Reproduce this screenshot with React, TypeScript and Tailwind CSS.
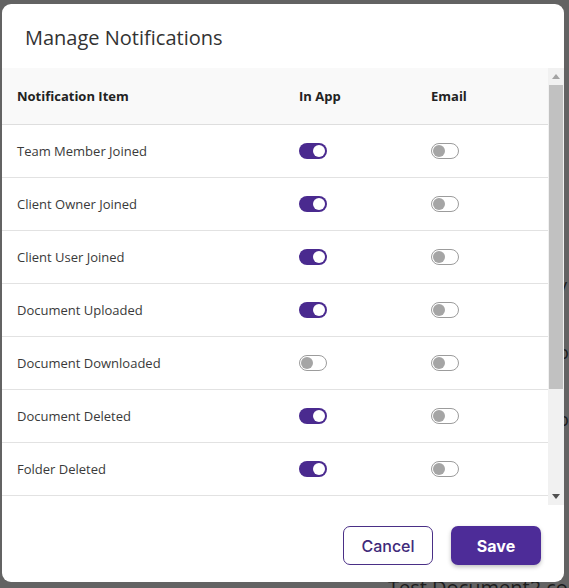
import { useState } from 'react'

type Row = { label: string; inApp: boolean; email: boolean }

const initialRows: Row[] = [
  { label: 'Team Member Joined', inApp: true, email: false },
  { label: 'Client Owner Joined', inApp: true, email: false },
  { label: 'Client User Joined', inApp: true, email: false },
  { label: 'Document Uploaded', inApp: true, email: false },
  { label: 'Document Downloaded', inApp: false, email: false },
  { label: 'Document Deleted', inApp: true, email: false },
  { label: 'Folder Deleted', inApp: true, email: false },
]

function Toggle({ on, onClick }: { on: boolean; onClick: () => void }) {
  return (
    <button
      onClick={onClick}
      className={`relative w-[28px] h-[16px] rounded-full ${
        on ? 'bg-[#4a2a8f]' : 'bg-white border border-[#9c9c9c]'
      }`}
    >
      <span
        className={`absolute top-1/2 -translate-y-1/2 w-[12px] h-[12px] rounded-full ${
          on ? 'right-[2px] bg-white' : 'left-[1px] bg-[#a5a5a5]'
        }`}
      />
    </button>
  )
}

export default function App() {
  const [rows, setRows] = useState(initialRows)

  const flip = (i: number, key: 'inApp' | 'email') =>
    setRows(rs => rs.map((r, j) => (j === i ? { ...r, [key]: !r[key] } : r)))

  return (
    <div
      className="relative w-[569px] h-[588px] overflow-hidden bg-[#636363] pt-[4px] pl-[2px]"
      style={{ fontFamily: '"Open Sans", "Noto Sans", sans-serif' }}
    >
      {/* page behind the overlay */}
      <span className="absolute left-[558px] top-[272px] text-[18px] text-[#1c1c1c]">y</span>
      <span className="absolute left-[558px] top-[339px] text-[18px] text-[#1c1c1c]">o</span>
      <span className="absolute left-[558px] top-[406px] text-[18px] text-[#1c1c1c]">o</span>
      <span className="absolute left-[388px] top-[576px] text-[20px] leading-[24px] text-[#1c1c1c] whitespace-nowrap">
        Test Document2 copy
      </span>

      {/* Modal */}
      <div className="relative w-[562px] h-[578px] bg-white rounded-[9px] flex flex-col overflow-hidden">
        <div className="h-[64px] flex items-center pl-[23px] pt-[3px]">
          <h1 className="text-[20px] font-medium text-[#333]">Manage Notifications</h1>
        </div>

        <div className="h-[437px] flex">
          <div className="flex-1">
            <div className="h-[57px] flex items-center pt-[1px] bg-[#f9f9f9] border-b border-[#dedede] text-[13px] font-bold text-[#222]">
              <div className="w-[297px] pl-[15px]">Notification Item</div>
              <div className="w-[132px]">In App</div>
              <div>Email</div>
            </div>
            {rows.map((row, i) => (
              <div
                key={row.label}
                className="h-[53px] flex items-center border-b border-[#e2e2e2] text-[13px] text-[#3a3a3a]"
              >
                <div className="w-[297px] pl-[15px] pt-[2px]">{row.label}</div>
                <div className="w-[132px] flex">
                  <Toggle on={row.inApp} onClick={() => flip(i, 'inApp')} />
                </div>
                <div className="flex">
                  <Toggle on={row.email} onClick={() => flip(i, 'email')} />
                </div>
              </div>
            ))}
          </div>

          {/* scrollbar */}
          <div className="w-[16px] bg-[#f1f1f1] flex flex-col">
            <div className="h-[17px] flex items-center justify-center">
              <svg width="8" height="5" viewBox="0 0 8 5">
                <path d="M4 0 L8 5 L0 5 Z" fill="#a3a3a3" />
              </svg>
            </div>
            <div className="h-[304px] mx-[1px] bg-[#c1c1c1]" />
            <div className="flex-1" />
            <div className="h-[17px] flex items-center justify-center">
              <svg width="8" height="5" viewBox="0 0 8 5">
                <path d="M0 0 L8 0 L4 5 Z" fill="#505050" />
              </svg>
            </div>
          </div>
        </div>

        <div
          className="flex-1 flex justify-end items-start gap-[18px] pt-[21px] pr-[23px]"
          style={{ fontFamily: '"Inter", "Roboto", sans-serif' }}
        >
          <button className="w-[90px] h-[39px] rounded-[7px] border border-[#4a2f86] bg-white text-[16px] font-medium text-[#3f2a7a]">
            Cancel
          </button>
          <button className="w-[90px] h-[39px] rounded-[7px] bg-[#4d2c98] text-[16px] font-bold text-white shadow-[0_2px_4px_rgba(0,0,0,0.25)]">
            Save
          </button>
        </div>
      </div>
    </div>
  )
}
